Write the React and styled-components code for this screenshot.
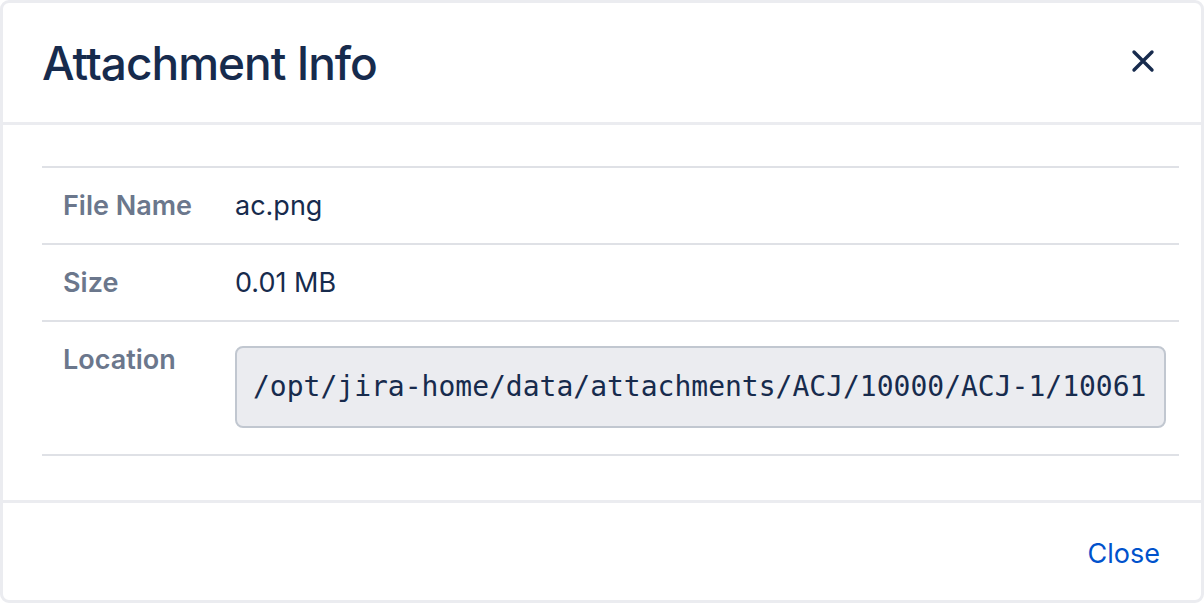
import styled, { createGlobalStyle } from 'styled-components';

const GlobalStyle = createGlobalStyle`
  html, body {
    margin: 0;
    padding: 0;
    background: #ffffff;
  }
  body {
    font-family: Inter, "Noto Sans", "Liberation Sans", sans-serif;
    color: #172b4d;
  }
`;

// dialog frame with the light grey border round it
const Dialog = styled.div`
  width: 1204px;
  height: 603px;
  box-sizing: border-box;
  border: 3px solid #ebecf0;
  border-radius: 9px;
  background: #ffffff;
  display: flex;
  flex-direction: column;
  overflow: hidden;
`;

const Header = styled.header`
  height: 119px;
  flex-shrink: 0;
  display: flex;
  align-items: center;
  justify-content: space-between;
  padding: 0 34px 0 39px;
  border-bottom: 3px solid #ebecf0;
`;

const Title = styled.h1`
  margin: 0;
  font-size: 46px;
  font-weight: 500;
  letter-spacing: -1px;
  color: #172b4d;
`;

const IconButton = styled.button`
  width: 48px;
  height: 48px;
  padding: 0;
  border: none;
  background: transparent;
  display: flex;
  align-items: center;
  justify-content: center;
  cursor: pointer;
  margin-top: -4px;
`;

const Body = styled.main`
  flex: 1;
  padding: 41px 22px 41px 39px;
`;

const Table = styled.div`
  border-top: 2px solid #dfe1e6;
`;

const Row = styled.div`
  display: grid;
  grid-template-columns: 193px 1fr;
  border-bottom: 2px solid #dfe1e6;
`;

const Label = styled.div`
  padding: 17px 0 17px 21px;
  line-height: 41px;
  font-size: 27px;
  font-weight: 600;
  color: #6b778c;
`;

const Value = styled.div`
  padding: 17px 0;
  line-height: 41px;
  font-size: 27px;
  color: #172b4d;
`;

const Code = styled.code`
  display: inline-block;
  margin: 7px 0 9px;
  padding: 0 18px 0 16px;
  line-height: 78px;
  border: 2px solid #c1c7d0;
  border-radius: 8px;
  background: #ebecf0;
  font-family: "DejaVu Sans Mono", "Liberation Mono", monospace;
  font-size: 28px;
  color: #172b4d;
`;

const Footer = styled.footer`
  height: 97px;
  flex-shrink: 0;
  display: flex;
  align-items: center;
  justify-content: flex-end;
  padding: 0 29px 0 39px;
  border-top: 3px solid #ebecf0;
`;

const LinkButton = styled.button`
  border: none;
  background: transparent;
  padding: 0 12px;
  font-family: inherit;
  font-size: 27px;
  color: #0052cc;
  cursor: pointer;
  margin-top: 4px;
`;

const CloseIcon = () => (
  <svg width="24" height="24" viewBox="0 0 24 24">
    <path
      d="M3 3 L21 21 M21 3 L3 21"
      stroke="#172b4d"
      strokeWidth="3.4"
      strokeLinecap="round"
      fill="none"
    />
  </svg>
);

const rows = [
  { label: 'File Name', value: 'ac.png' },
  { label: 'Size', value: '0.01 MB' },
];

export default function App() {
  return (
    <>
      <GlobalStyle />
      <Dialog>
        <Header>
          <Title>Attachment Info</Title>
          <IconButton aria-label="Close">
            <CloseIcon />
          </IconButton>
        </Header>
        <Body>
          <Table>
            {rows.map((r) => (
              <Row key={r.label}>
                <Label>{r.label}</Label>
                <Value>{r.value}</Value>
              </Row>
            ))}
            <Row>
              <Label>Location</Label>
              <Value>
                <Code>/opt/jira-home/data/attachments/ACJ/10000/ACJ-1/10061</Code>
              </Value>
            </Row>
          </Table>
        </Body>
        <Footer>
          <LinkButton>Close</LinkButton>
        </Footer>
      </Dialog>
    </>
  );
}
